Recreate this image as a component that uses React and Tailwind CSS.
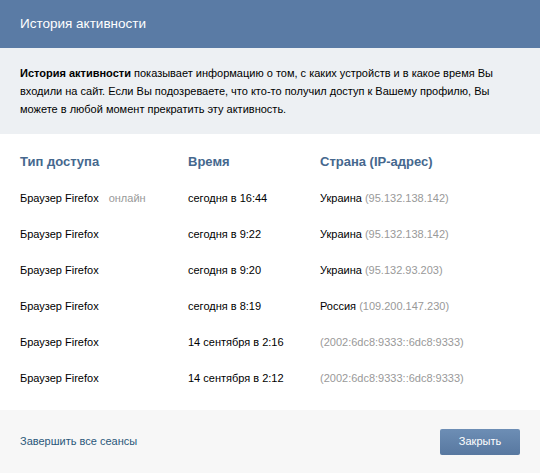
export default function App() {
  const rows = [
    { type: "Браузер Firefox", online: true, time: "сегодня в 16:44", country: "Украина", ip: "(95.132.138.142)" },
    { type: "Браузер Firefox", time: "сегодня в 9:22", country: "Украина", ip: "(95.132.138.142)" },
    { type: "Браузер Firefox", time: "сегодня в 9:20", country: "Украина", ip: "(95.132.93.203)" },
    { type: "Браузер Firefox", time: "сегодня в 8:19", country: "Россия", ip: "(109.200.147.230)" },
    { type: "Браузер Firefox", time: "14 сентября в 2:16", country: "", ip: "(2002:6dc8:9333::6dc8:9333)" },
    { type: "Браузер Firefox", time: "14 сентября в 2:12", country: "", ip: "(2002:6dc8:9333::6dc8:9333)" },
  ];

  return (
    <div className="w-[540px] h-[473px] bg-white text-[11px] text-black" style={{ fontFamily: "'Liberation Sans', Arial, sans-serif" }}>
      {/* Header */}
      <div className="h-[48px] bg-[#5a7ba5] flex items-center px-5">
        <span className="text-white text-[13.5px]">История активности</span>
      </div>

      {/* Description */}
      <div className="h-[86px] bg-[#edf0f3] px-5 pt-[16px] leading-[18px] text-[11px]">
        <b>История активности</b> показывает информацию о том, с каких устройств и в какое время Вы
        входили на сайт. Если Вы подозреваете, что кто-то получил доступ к Вашему профилю, Вы
        можете в любой момент прекратить эту активность.
      </div>

      {/* Table */}
      <div className="h-[276px] px-5 pt-[19px] text-[11px]">
        <div className="flex h-[18px] items-center text-[#45688e] font-bold text-[13px]">
          <div className="w-[168px]">Тип доступа</div>
          <div className="w-[132px]">Время</div>
          <div>Страна (IP-адрес)</div>
        </div>
        <div className="pt-[9px]">
          {rows.map((r, i) => (
            <div key={i} className="flex h-[36px] items-center">
              <div className="w-[168px]">
                {r.type}
                {r.online && <span className="text-[#999] ml-[10px]">онлайн</span>}
              </div>
              <div className="w-[132px]">{r.time}</div>
              <div>
                {r.country && <span>{r.country} </span>}
                <span className="text-[#999]">{r.ip}</span>
              </div>
            </div>
          ))}
        </div>
      </div>

      {/* Footer */}
      <div className="h-[63px] bg-[#f7f7f7] flex items-center justify-between px-5">
        <a className="text-[#2b587a] text-[11px] cursor-pointer">Завершить все сеансы</a>
        <button className="w-[80px] h-[26px] rounded-[2px] bg-gradient-to-b from-[#6d8eb5] to-[#5878a0] text-white text-[11px]">
          Закрыть
        </button>
      </div>
    </div>
  );
}
